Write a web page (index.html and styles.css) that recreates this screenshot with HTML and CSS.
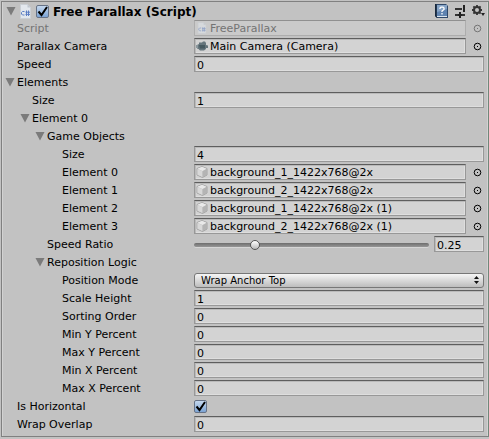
FILE: index.html
```html
<!DOCTYPE html>
<html lang="en">
<head>
<meta charset="utf-8">
<title>Inspector</title>
<link rel="stylesheet" href="styles.css">
</head>
<body>
<svg class="sprites" aria-hidden="true">
  <symbol id="arrow" viewBox="0 0 10 10"><path d="M.5 0H9.500L5 8.500Z" fill="#7b7b7b"/></symbol>
  <symbol id="picker" viewBox="0 0 9 9"><circle cx="4.500" cy="4.500" r="3.300" fill="none" stroke="currentColor"/><rect x="4" y="4" width="1" height="1" fill="currentColor"/></symbol>
  <symbol id="cube" viewBox="0 0 12 12"><path d="M6 .5L11 2.500V9L6.500 11.500L1 9V2.500Z" fill="#c2c2c2" stroke="#999" stroke-width=".8"/><path d="M6 .8L10.600 2.700L6.500 5L1.400 2.800Z" fill="#e9e9e9"/><path d="M1.400 3L6.300 5.200V11L1.400 8.800Z" fill="#d8d8d8"/><path d="M6.700 5.200L10.700 3V8.800L6.700 11Z" fill="#b4b4b4"/></symbol>
  <symbol id="camera" viewBox="0 0 12 12"><path d="M1 5L3 4V2.500H6L7 1.500H9L10 3V5L12 5.500V8H10V9L8 10.500H4L2.500 9L1 8.500Z" fill="#65757c"/><path d="M3 5H9V8.500H4Z" fill="#465960"/><path d="M0 5H2V8H0Z" fill="#8b989d"/></symbol>
  <symbol id="script" viewBox="0 0 11 15"><path d="M.5 .5H7.500L10.500 3.500V14.500H.5Z" fill="#e3e8ee" stroke="#cbd0d6"/><path d="M7.500 .5V3.500H10.500Z" fill="#bfc6cf"/><path d="M4.500 7.500H2.500L1.500 8.500V10L2.500 11H4.500M6.500 6.500V12M8.500 6.500V12M5.500 8.200H10M5.500 10.400H10" fill="none" stroke="#5c7fc4"/></symbol>
</svg>
<main class="component">
  <header class="header">
    <button class="fold" aria-label="Collapse component"><svg><use href="#arrow"/></svg></button>
    <svg class="script-icon"><use href="#script"/></svg>
    <input class="check" id="enabled" type="checkbox" checked>
    <label class="title" for="enabled">Free Parallax (Script)</label>
    <button class="tool" aria-label="Help"><svg viewBox="0 0 14 14"><path d="M0 0H11L13 2V14H2L0 12Z" fill="#2f4869"/><path d="M2 1H12V12H2Z" fill="#5f83b0"/><path d="M2 1H12V5L2 8Z" fill="#86a4c6"/><path d="M0 0H1.500V12L2.500 14H2L0 12Z" fill="#18283c"/><path d="M2 12.500H12" stroke="#dbe5ee"/><path d="M5 5V4L6 3.200H8L9 4V5.500L7 7V8M7 9V10.500" fill="none" stroke="#fff" stroke-width="1.300"/></svg></button>
    <button class="tool" aria-label="Presets"><svg viewBox="0 0 14 14"><path d="M2 5H9M2 11H5M9 11H12" stroke="#333" stroke-width="2"/><path d="M11 1V8M7 8V14" stroke="#222" stroke-width="2"/><path d="M5 11H9" stroke="#222" stroke-width="2"/></svg></button>
    <button class="tool" aria-label="Settings"><svg viewBox="0 0 14 14"><circle cx="6" cy="6" r="3" fill="none" stroke="#333" stroke-width="2"/><path d="M6 1V3M6 9V11M1 6H3M9 6H11M2.400 2.400L4 4M8 8L9.600 9.600M9.600 2.400L8 4M4 8L2.400 9.600" stroke="#333" stroke-width="1.800"/><path d="M10 9H14L12 12Z" fill="#222"/></svg></button>
  </header>

  <div class="row disabled"><label for="script-ref">Script</label><div class="object"><svg class="thumb"><use href="#script"/></svg><input id="script-ref" value="FreeParallax" disabled></div><button class="pick" aria-label="Select script" disabled><svg><use href="#picker"/></svg></button></div>
  <div class="row"><label for="cam">Parallax Camera</label><div class="object"><svg class="thumb"><use href="#camera"/></svg><input id="cam" value="Main Camera (Camera)" readonly></div><button class="pick" aria-label="Select camera"><svg><use href="#picker"/></svg></button></div>
  <div class="row"><label for="speed">Speed</label><input class="field" id="speed" value="0"></div>
  <div class="row"><button class="foldout"><svg><use href="#arrow"/></svg>Elements</button></div>
  <div class="row level-1"><label for="size">Size</label><input class="field" id="size" value="1"></div>
  <div class="row level-1"><button class="foldout"><svg><use href="#arrow"/></svg>Element 0</button></div>
  <div class="row level-2"><button class="foldout"><svg><use href="#arrow"/></svg>Game Objects</button></div>
  <div class="row level-3"><label for="count">Size</label><input class="field" id="count" value="4"></div>
  <div class="row level-3"><label for="e0">Element 0</label><div class="object"><svg class="thumb"><use href="#cube"/></svg><input id="e0" value="background_1_1422x768@2x" readonly></div><button class="pick" aria-label="Select element 0"><svg><use href="#picker"/></svg></button></div>
  <div class="row level-3"><label for="e1">Element 1</label><div class="object"><svg class="thumb"><use href="#cube"/></svg><input id="e1" value="background_2_1422x768@2x" readonly></div><button class="pick" aria-label="Select element 1"><svg><use href="#picker"/></svg></button></div>
  <div class="row level-3"><label for="e2">Element 2</label><div class="object"><svg class="thumb"><use href="#cube"/></svg><input id="e2" value="background_1_1422x768@2x (1)" readonly></div><button class="pick" aria-label="Select element 2"><svg><use href="#picker"/></svg></button></div>
  <div class="row level-3"><label for="e3">Element 3</label><div class="object"><svg class="thumb"><use href="#cube"/></svg><input id="e3" value="background_2_1422x768@2x (1)" readonly></div><button class="pick" aria-label="Select element 3"><svg><use href="#picker"/></svg></button></div>
  <div class="row level-2"><label for="ratio">Speed Ratio</label><div class="slider"><input id="ratio" type="range" min="0" max="1" step="0.01" value="0.25"><input class="field" aria-label="Speed ratio value" value="0.25"></div></div>
  <div class="row level-2"><button class="foldout"><svg><use href="#arrow"/></svg>Reposition Logic</button></div>
  <div class="row level-3"><label for="mode">Position Mode</label><div class="popup"><select id="mode"><option>Wrap Anchor Top</option></select><svg viewBox="0 0 5 8"><path d="M0 3L2.500 0L5 3ZM0 5H5L2.500 8Z" fill="#111"/></svg></div></div>
  <div class="row level-3"><label for="scale">Scale Height</label><input class="field" id="scale" value="1"></div>
  <div class="row level-3"><label for="order">Sorting Order</label><input class="field" id="order" value="0"></div>
  <div class="row level-3"><label for="min-y">Min Y Percent</label><input class="field" id="min-y" value="0"></div>
  <div class="row level-3"><label for="max-y">Max Y Percent</label><input class="field" id="max-y" value="0"></div>
  <div class="row level-3"><label for="min-x">Min X Percent</label><input class="field" id="min-x" value="0"></div>
  <div class="row level-3"><label for="max-x">Max X Percent</label><input class="field" id="max-x" value="0"></div>
  <div class="row"><label for="horizontal">Is Horizontal</label><input class="check" id="horizontal" type="checkbox" checked></div>
  <div class="row"><label for="overlap">Wrap Overlap</label><input class="field" id="overlap" value="0"></div>
</main>
</body>
</html>
```
FILE: styles.css
```css
* { box-sizing: border-box; }
body {
  margin: 0;
  padding: 1px 0 2px 1px;
  background: #c2c2c2;
  color: #000;
  font: 11px/14px "DejaVu Sans", sans-serif;
}
.sprites { display: none; }
svg { display: block; flex: none; }
button, input, select { margin: 0; padding: 0; border: 0; background: none; font: inherit; color: inherit; }
.component {
  padding: 0 3px 2px 0;
  border: 1px solid #808080;
  border-right-color: #71877a;
  box-shadow: inset 1px 0 #d2d2d2, inset -1px 0 #d2d2d2;
}
.header { display: flex; align-items: center; height: 18px; padding-left: 4px; }
.fold { padding-top: 2px; }
.fold svg { width: 10px; height: 10px; }
.script-icon { width: 11px; height: 15px; margin: 0 5px 0 4px; }
.title { flex: 1; padding-top: 2px; margin-left: 4px; font-size: 12px; font-weight: bold; }
.tool { margin-left: 4px; }
.tool svg { width: 14px; height: 14px; }
.row {
  --indent: 15px;
  display: grid;
  grid-template-columns: 192px 1fr auto;
  align-items: center;
  height: 16px;
  margin-bottom: 2px;
}
.row > label { padding: 2px 0 0 var(--indent); white-space: nowrap; }
.level-1 { --indent: 30px; }
.level-2 { --indent: 45px; }
.level-3 { --indent: 60px; }
.foldout { display: flex; align-items: center; gap: 2px; padding: 2px 0 0 calc(var(--indent) - 12px); white-space: nowrap; }
.foldout svg { width: 10px; height: 10px; }
.field, .object {
  width: 100%;
  min-width: 0;
  height: 16px;
  border: 1px solid #989898;
  border-top-color: #5e5e5e;
  background: #d3d3d3;
  box-shadow: inset 1px 1px #bababa, inset -1px -1px #dedede;
}
.row > .field, .popup, .slider { grid-column: 2 / -1; margin-right: 1px; }
.row > .field { width: auto; }
.field { padding: 2px 2px 0; }
.object { display: flex; align-items: center; gap: 2px; padding: 0 1px; }
.object input { flex: 1; min-width: 0; height: 14px; padding-top: 2px; }
.thumb { width: 12px; height: 12px; }
.pick { width: 19px; height: 16px; padding-left: 7px; }
.pick svg { width: 9px; height: 9px; }
.disabled label, .disabled input, .disabled .pick { color: #747474; }
.disabled .object { border-color: #adadad; border-top-color: #909090; background: #cacaca; box-shadow: none; }
.disabled .thumb { opacity: .5; }
.check {
  appearance: none;
  width: 13px;
  height: 13px;
  border: 1px solid #667286;
  border-radius: 2px;
  background: url("data:image/svg+xml,%3Csvg xmlns='http://www.w3.org/2000/svg' viewBox='0 0 11 11'%3E%3Cpath d='M1.500 5.500L4.500 9L10 1' fill='none' stroke='%23000' stroke-width='2'/%3E%3C/svg%3E"), linear-gradient(#c5d8ee, #7ba3d4);
}
.slider { display: grid; grid-template-columns: 1fr 50px; gap: 5px; align-items: center; }
.slider input[type="range"] { appearance: none; width: 100%; height: 14px; padding-top: 2px; }
.slider input::-webkit-slider-runnable-track {
  height: 4px;
  border-radius: 2px;
  background: linear-gradient(#6d6d6d, #969696);
  box-shadow: 0 1px #d6d6d6;
}
.slider input::-webkit-slider-thumb {
  appearance: none;
  width: 10px;
  height: 10px;
  margin-top: -3px;
  border: 1px solid #555;
  border-radius: 50%;
  background: linear-gradient(#fff, #b9b9b9);
}
.popup { display: grid; align-items: center; }
.popup select {
  grid-area: 1 / 1;
  appearance: none;
  width: 100%;
  height: 15px;
  padding: 0 6px;
  border: 1px solid #777;
  border-radius: 3px;
  background: linear-gradient(#f5f5f5, #bdbdbd);
  font-size: 10px;
  line-height: 13px;
}
.popup svg { grid-area: 1 / 1; justify-self: end; width: 5px; height: 8px; margin-right: 5px; pointer-events: none; }
```
